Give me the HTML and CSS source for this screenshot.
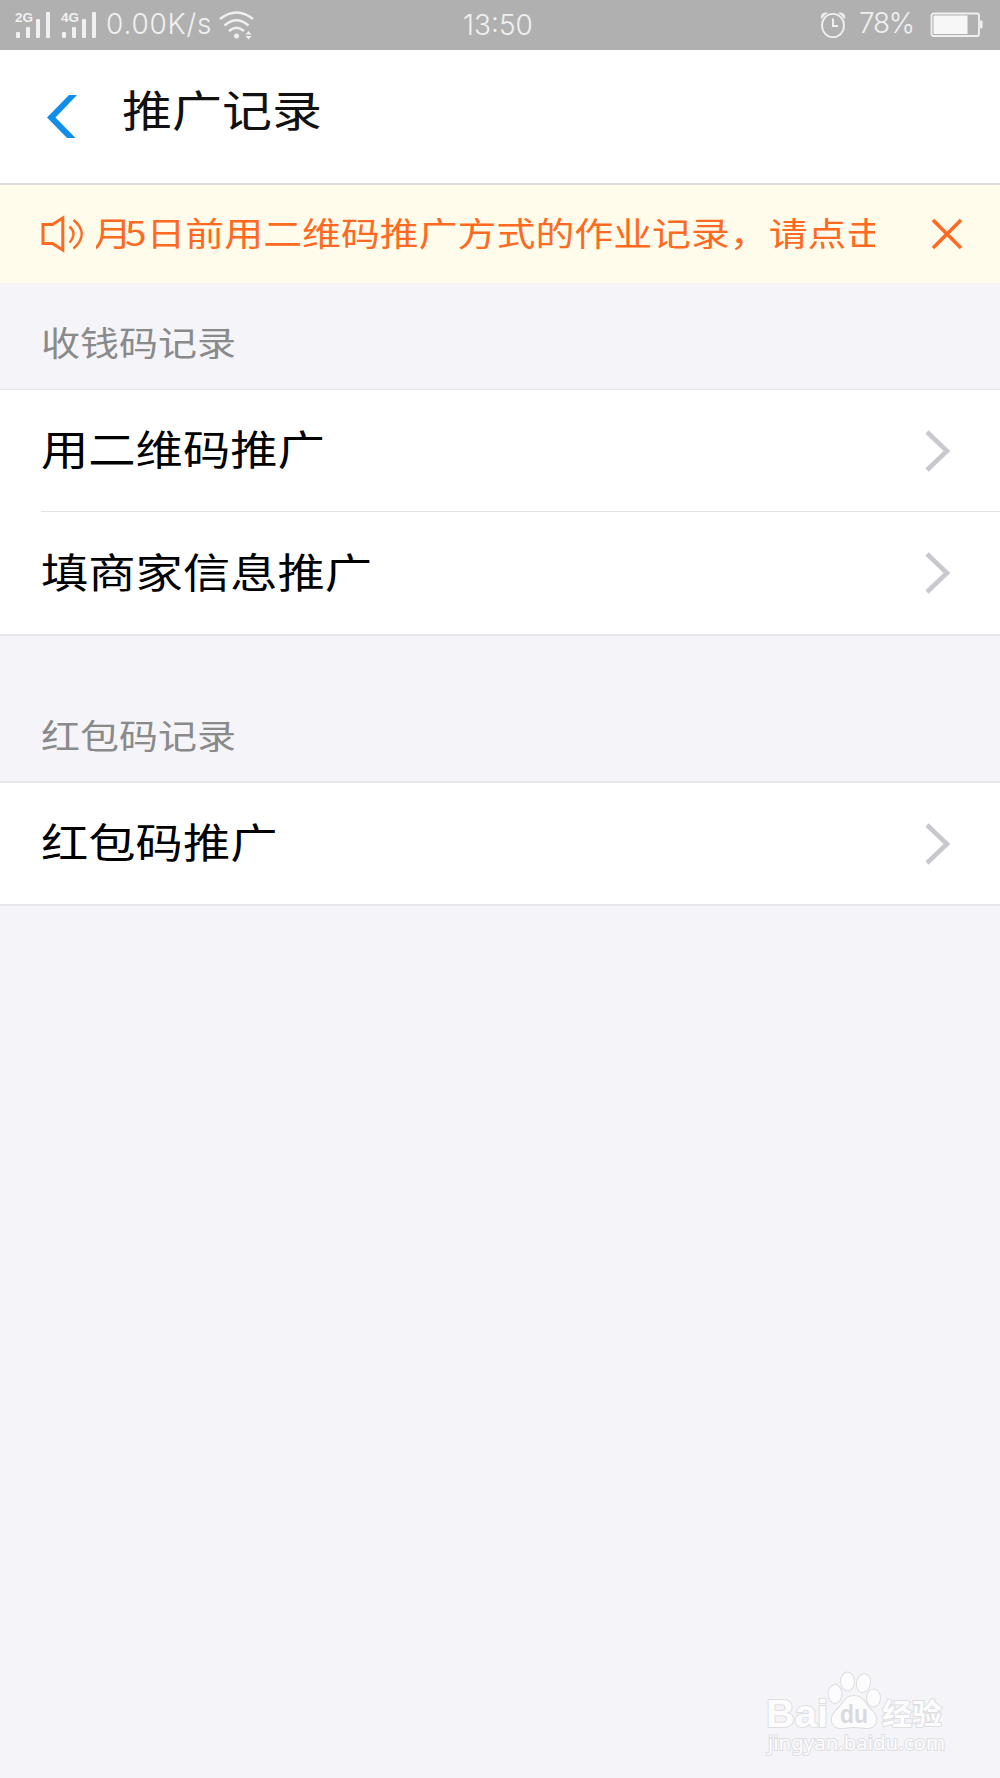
FILE: index.html
```html
<!DOCTYPE html>
<html lang="zh-CN">
<head>
<meta charset="utf-8">
<title>推广记录</title>
<link rel="stylesheet" href="styles.css">
</head>
<body>
<div class="screen">
  <div class="status">
    <svg class="signals" width="84" height="30" viewBox="0 0 84 30">
      <g fill="#f0f0f0">
        <text class="net" x="0" y="12" textLength="18" lengthAdjust="spacingAndGlyphs">2G</text>
        <rect x="1" y="22" width="4" height="6" rx="1"/><rect x="11" y="17" width="4" height="11" rx="1"/><rect x="21" y="9" width="4" height="19" rx="1"/><rect x="31" y="2" width="4" height="26" rx="1"/>
        <text class="net" x="46" y="12" textLength="18" lengthAdjust="spacingAndGlyphs">4G</text>
        <rect x="47" y="22" width="4" height="6" rx="1"/><rect x="57" y="17" width="4" height="11" rx="1"/><rect x="67" y="9" width="4" height="19" rx="1"/><rect x="77" y="2" width="4" height="26" rx="1"/>
      </g>
    </svg>
    <span class="speed">0.00K/s</span>
    <svg class="wifi" width="36" height="30" viewBox="0 0 36 30" fill="none" stroke="#f0f0f0" stroke-width="2.500">
      <path d="M1 9Q17.500 -4 34 9M5.500 15.500Q17.500 5 29.500 15.500M10 21Q17.500 14.500 25 21"/>
      <circle cx="17.500" cy="26" r="2.500" fill="#f0f0f0" stroke="none"/>
      <path d="M26.500 24.500L29.500 21L32.500 24.500ZM26.500 26L29.500 29.500L32.500 26Z" fill="#f0f0f0" stroke="none"/>
    </svg>
    <span class="clock">13:50</span>
    <svg class="alarm" width="26" height="28" viewBox="0 0 26 28" fill="none" stroke="#f0f0f0" stroke-width="1.800">
      <ellipse cx="13" cy="14.500" rx="11" ry="11.700"/>
      <path d="M13 7.500V15H18" stroke-width="2"/>
      <path d="M1 7Q1 1 7.500 2Q4 3.500 1.800 7.500ZM25 7Q25 1 18.500 2Q22 3.500 24.200 7.500Z" fill="#f0f0f0" stroke-width=".5"/>
    </svg>
    <span class="percent">78%</span>
    <svg class="battery" width="54" height="26" viewBox="0 0 54 26">
      <rect x="1.500" y="1.500" width="47.500" height="22.500" rx="2" fill="none" stroke="#f0f0f0" stroke-width="1.800"/>
      <rect x="3.500" y="3.500" width="34" height="18.500" fill="#f7f7f7"/>
      <rect x="50" y="8.500" width="2.500" height="8" rx="1" fill="#f0f0f0"/>
    </svg>
  </div>

  <header class="header">
    <svg class="back" width="30" height="43" viewBox="0 0 30 43"><path d="M22 0H30L8.500 22.500L28.500 43H20L0 22.500Z" fill="#108ee9"/></svg>
    <h1 class="title">推广记录</h1>
  </header>

  <div class="notice">
    <svg class="speaker" width="44" height="38" viewBox="0 0 44 38" fill="none" stroke="#ff6a22" stroke-width="3">
      <path d="M3 9.500H12.500L22.800 3V35L12.500 28.500H3Z"/>
      <path d="M29.500 11.500Q37.500 18.500 29.500 27.500M33.500 5Q50 18.500 33.500 33.500" stroke-width="2.400"/>
    </svg>
    <div class="marquee"><div class="marquee-text"><span class="lead">月</span>5日前用二维码推广方式的作业记录，请点击</div></div>
    <svg class="close" width="32" height="32" viewBox="0 0 32 32"><path d="M2 2L30 30M30 2L2 30" stroke="#ff6a22" stroke-width="3.600"/></svg>
  </div>

  <h2 class="label">收钱码记录</h2>
  <div class="list">
    <div class="row"><span class="row-text">用二维码推广</span><svg class="arrow" width="26" height="42" viewBox="0 0 26 42"><path d="M2 2L22 21L2 40" fill="none" stroke="#c8c8cd" stroke-width="4.600"/></svg></div>
    <div class="row"><span class="row-text">填商家信息推广</span><svg class="arrow" width="26" height="42" viewBox="0 0 26 42"><path d="M2 2L22 21L2 40" fill="none" stroke="#c8c8cd" stroke-width="4.600"/></svg></div>
  </div>

  <h2 class="label label-spaced">红包码记录</h2>
  <div class="list list-last">
    <div class="row"><span class="row-text">红包码推广</span><svg class="arrow" width="26" height="42" viewBox="0 0 26 42"><path d="M2 2L22 21L2 40" fill="none" stroke="#c8c8cd" stroke-width="4.600"/></svg></div>
  </div>

  <svg class="watermark" width="190" height="90" viewBox="0 0 190 90">
    <g class="mark">
      <text class="wm-bai" x="6" y="56" textLength="62" lengthAdjust="spacingAndGlyphs">Bai</text>
      <ellipse cx="75" cy="23" rx="6.500" ry="9"/>
      <ellipse cx="87.500" cy="10.500" rx="6.500" ry="9"/>
      <ellipse cx="103.500" cy="12" rx="6.500" ry="9" transform="rotate(12 103.500 12)"/>
      <ellipse cx="113.500" cy="27" rx="6.500" ry="8.500"/>
      <path d="M94 25C84 25 83 34 76 40C69 47 71 57 81 57C87 57 90 56 94 56C98 56 102 57 107 57C117 57 119 47 112 40C105 34 104 25 94 25Z"/>
      <text class="wm-cn" x="122" y="54" textLength="60" lengthAdjust="spacingAndGlyphs">经验</text>
      <text class="wm-url" x="8" y="79" textLength="177" lengthAdjust="spacingAndGlyphs">jingyan.baidu.com</text>
    </g>
    <text class="wm-du" x="80" y="52" textLength="28" lengthAdjust="spacingAndGlyphs">du</text>
  </svg>
</div>
</body>
</html>
```
FILE: styles.css
```css
* { box-sizing: border-box; }

body {
  margin: 0;
  background: #f4f4f9;
  font-family: "Noto Sans CJK SC", sans-serif;
}

.screen {
  display: flex;
  flex-direction: column;
  width: 1000px;
  height: 1778px;
  overflow: hidden;
}

svg { display: block; flex: none; }

.status {
  display: flex;
  align-items: flex-start;
  height: 50px;
  flex: none;
  padding-left: 15px;
  background: #b0b0b0;
  color: #f0f0f0;
  font-family: Inter, sans-serif;
  font-weight: 300;
  font-size: 28px;
  line-height: 34px;
  white-space: nowrap;
}

.signals { margin-top: 10px; }
.net { font: bold 12.5px "Liberation Sans", sans-serif; }
.speed { width: 112px; margin: 7px 0 0 7px; letter-spacing: 0.8px; }
.wifi { margin: 10px 0 0 1px; }
.clock { width: 80px; margin: 8px 0 0 208px; letter-spacing: 0; }
.alarm { margin: 11px 0 0 277px; }
.percent { width: 60px; margin: 6px 0 0 13px; letter-spacing: -1.3px; }
.battery { margin: 12px 0 0 11px; }

.header {
  display: flex;
  align-items: flex-start;
  flex: none;
  height: 135px;
  padding-left: 47px;
  background: #fff;
  border-bottom: 2px solid #dcdcdc;
}

.back { margin-top: 45px; }

.title {
  margin: 28px 0 0 45px;
  color: #111;
  font-weight: 400;
  font-size: 50px;
  line-height: 60px;
  transform: scaleY(0.86);
}

.notice {
  display: flex;
  align-items: center;
  flex: none;
  height: 98px;
  padding-left: 40px;
  background: #fffcec;
}

.marquee {
  width: 779px;
  margin: 0 0 6px 12px;
  overflow: hidden;
}

.marquee-text {
  margin-left: -3px;
  color: #ff6a22;
  font-size: 38.9px;
  line-height: 54px;
  white-space: nowrap;
  transform: scaleY(0.86);
}

.lead { letter-spacing: -7px; }

.close { margin-left: 56px; }

.label {
  flex: none;
  height: 106px;
  margin: 0;
  padding: 31px 0 0 41px;
  color: #8a8a8a;
  font-weight: 400;
  font-size: 39px;
  line-height: 54px;
  transform: scaleY(0.86);
  transform-origin: 0 58px;
}

.label-spaced {
  height: 145px;
  padding-top: 71px;
  transform-origin: 0 98px;
}

.list {
  flex: none;
  background: #fff;
  border-top: 1px solid #e2e2e4;
  border-bottom: 2px solid #e8e8ea;
}

.list-last { border-top: 2px solid #e8e8ea; }

.row {
  display: flex;
  align-items: center;
  justify-content: space-between;
  height: 121px;
  margin-left: 41px;
  padding-right: 49px;
  color: #000;
  font-size: 47.3px;
}

.row + .row {
  height: 123px;
  border-top: 1px solid #e2e2e4;
}

.row-text {
  margin-bottom: 5px;
  line-height: 64px;
  transform: scaleY(0.86);
}

.watermark {
  margin: auto 50px 17px auto;
}

.mark {
  fill: #fcfcfd;
  stroke: #dedee2;
  stroke-width: 2px;
  paint-order: stroke;
}

.wm-bai { font: bold 39px "Liberation Sans", sans-serif; }
.wm-cn { font: bold 29px "Noto Sans CJK SC", sans-serif; }
.wm-url { font: 20px "Noto Sans", sans-serif; }

.wm-du {
  fill: #dadade;
  font: bold 25px "Liberation Sans", sans-serif;
}
```
